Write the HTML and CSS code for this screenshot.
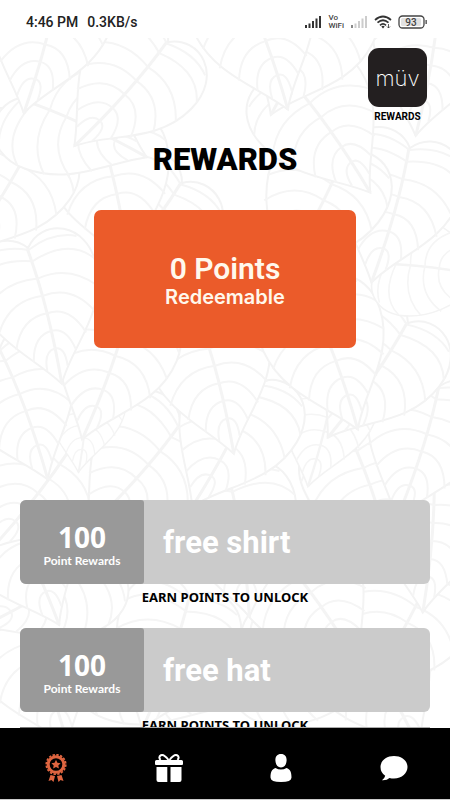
FILE: index.html
```html
<!DOCTYPE html>
<html lang="en">
<head>
<meta charset="utf-8">
<meta name="viewport" content="width=device-width, initial-scale=1">
<title>Rewards</title>
<link rel="stylesheet" href="styles.css">
</head>
<body>
<div class="status">
  <div class="status-left"><span>4:46 PM</span><span>0.3KB/s</span></div>
  <div class="status-right">
    <svg width="18" height="14" viewBox="0 0 18 14" fill="#333"><path d="M1 10h2v3H1zM4.500 8.500h2V13h-2zM8 6h2v7H8zM11.500 3.500h2V13h-2zM15 1h2v12h-2z"/></svg>
    <span class="vowifi"><span>Vo</span><span>WiFi</span></span>
    <svg width="18" height="14" viewBox="0 0 18 14" fill="#ccc"><path fill="#888" d="M1 10h2v3H1z"/><path d="M4.500 8.500h2V13h-2zM8 6h2v7H8zM11.500 3.500h2V13h-2zM15 1h2v12h-2z"/></svg>
    <svg width="18" height="14" viewBox="0 0 18 14" fill="none" stroke="#333" stroke-width="1.700"><path d="M1 5Q9-2 17 5M3.500 7.700Q9 2.800 14.500 7.700M6 10.300Q9 7.500 12 10.300"/><path fill="#333" stroke="none" d="M7.300 11.400Q9 10 10.700 11.400L9 13.500z"/><path stroke-width=".8" d="M14.500 9v4M13 11.500l1.500 1.500 1.500-1.500"/></svg>
    <svg width="30" height="14" viewBox="0 0 30 14"><rect x="1" y="1" width="25" height="12" rx="3.500" fill="#fff" stroke="#444" stroke-width="1.300"/><rect x="3" y="3" width="20" height="8" rx="1.500" fill="#e2e2e2"/><path d="M27.500 5h1.300v4h-1.300z" fill="#444"/><text x="13" y="10.500" text-anchor="middle" class="battery-text">93</text></svg>
  </div>
</div>

<main class="screen">
  <svg class="leaves" viewBox="0 0 450 690" preserveAspectRatio="xMidYMin slice" aria-hidden="true">
    <defs>
      <g id="leaf">
        <path class="leaf-edge" d="M0 0C-20-26-66-12-62 34C-58 82-22 106 0 140C18 106 60 82 62 34C64-12 20-26 0 0Z"/>
        <path class="leaf-rib" d="M-1 0Q6 60 0 140"/>
        <path class="leaf-vein" d="M0 2Q-28-10-50 0M1 14Q-42 0-62 26M2 32Q-36 26-59 54M3 50Q-32 46-50 78M3 68Q-24 66-36 96M3 86Q-16 86-22 112M2 104Q-10 104-11 124M0 2Q28-10 50 0M1 14Q42 0 62 26M2 32Q36 26 59 54M3 50Q34 46 50 78M3 68Q26 66 36 96M3 86Q18 86 22 110M2 104Q12 104 10 124"/>
      </g>
    </defs>
    <use href="#leaf" transform="translate(250 620) rotate(-80)"/>
    <use href="#leaf" transform="translate(100 610) rotate(-65)"/>
    <use href="#leaf" transform="translate(20 575) rotate(-20)"/>
    <use href="#leaf" transform="translate(350 590) rotate(-30)"/>
    <use href="#leaf" transform="translate(430 540) rotate(30)"/>
    <use href="#leaf" transform="translate(280 515) rotate(-35)"/>
    <use href="#leaf" transform="translate(190 560) rotate(20)"/>
    <use href="#leaf" transform="translate(100 520) rotate(60)"/>
    <use href="#leaf" transform="translate(0 460) rotate(-25)"/>
    <use href="#leaf" transform="translate(435 435) rotate(5)"/>
    <use href="#leaf" transform="translate(230 440) rotate(-8)"/>
    <use href="#leaf" transform="translate(352 400) rotate(-18)"/>
    <use href="#leaf" transform="translate(78 400) rotate(38)"/>
    <use href="#leaf" transform="translate(180 388) rotate(42)"/>
    <use href="#leaf" transform="translate(440 348) rotate(18)"/>
    <use href="#leaf" transform="translate(335 340) rotate(14) scale(.8)"/>
    <use href="#leaf" transform="translate(258 345) rotate(28)"/>
    <use href="#leaf" transform="translate(88 344) rotate(6) scale(.65)"/>
    <use href="#leaf" transform="translate(0 310) rotate(-20)"/>
    <use href="#leaf" transform="translate(200 280) rotate(-14)"/>
    <use href="#leaf" transform="translate(408 285) rotate(35)"/>
    <use href="#leaf" transform="translate(310 260) rotate(-20)"/>
    <use href="#leaf" transform="translate(130 270) rotate(20)"/>
    <use href="#leaf" transform="translate(385 225) rotate(-82) scale(.8)"/>
    <use href="#leaf" transform="translate(28 210) rotate(-14)"/>
    <use href="#leaf" transform="translate(410 110) rotate(16)"/>
    <use href="#leaf" transform="translate(182 145) rotate(38)"/>
    <use href="#leaf" transform="translate(345 117) rotate(28)"/>
    <use href="#leaf" transform="translate(100 90) rotate(-12)"/>
    <use href="#leaf" transform="translate(35 100) rotate(32)"/>
    <use href="#leaf" transform="translate(290 40) rotate(-35)"/>
    <use href="#leaf" transform="translate(20 60) rotate(-65)"/>
    <use href="#leaf" transform="translate(168 4) rotate(42)"/>
    <use href="#leaf" transform="translate(440 -40) rotate(10)"/>
    <use href="#leaf" transform="translate(330 -50) rotate(25)"/>
    <use href="#leaf" transform="translate(240 -60) rotate(-20)"/>
    <use href="#leaf" transform="translate(60 -60) rotate(15)"/>
  </svg>

  <header class="brand">
    <div class="brand-tile">müv</div>
    <div class="brand-label">REWARDS</div>
  </header>

  <h1 class="title">REWARDS</h1>

  <section class="points">
    <div class="points-value">0 Points</div>
    <div class="points-label">Redeemable</div>
  </section>

  <ul class="rewards">
    <li class="reward">
      <div class="reward-card">
        <div class="reward-cost"><strong>100</strong><span>Point Rewards</span></div>
        <div class="reward-name">free shirt</div>
      </div>
      <div class="reward-note">EARN POINTS TO UNLOCK</div>
    </li>
    <li class="reward">
      <div class="reward-card">
        <div class="reward-cost"><strong>100</strong><span>Point Rewards</span></div>
        <div class="reward-name">free hat</div>
      </div>
      <div class="reward-note">EARN POINTS TO UNLOCK</div>
    </li>
  </ul>
  <div class="list-edge"></div>
</main>

<nav class="tabs">
  <button class="tab tab-active" type="button" aria-label="Rewards">
    <svg width="28" height="28" viewBox="0 0 28 28"><circle cx="14" cy="10.500" r="7.800" fill="none" stroke="currentColor" stroke-width="3"/><circle cx="14" cy="10.500" r="9.700" fill="none" stroke="currentColor" stroke-width="1.800" stroke-dasharray="2.400 1.410"/><path fill="currentColor" d="M14 5.800l1.400 3 3.200.4-2.300 2.200.6 3.200-2.900-1.600-2.900 1.600.6-3.200-2.300-2.200 3.200-.4zM8.500 21l4.500 1-1.500 6-2-2-3 1zM19.500 21l-4.500 1 1.500 6 2-2 3 1z"/></svg>
  </button>
  <button class="tab" type="button" aria-label="Gifts">
    <svg width="28" height="28" viewBox="0 0 28 28" fill="currentColor"><path d="M1.500 6h25q1.500 0 1.500 1.500V10q0 1-1 1H1q-1 0-1-1V7.500Q0 6 1.500 6zM1.500 13H12.300V28H3.500q-2 0-2-2zM15.500 13h11V26q0 2-2 2h-9z"/><path d="M13.500 6Q9 0 6 1.200Q3 3 5.500 6M14.500 6Q19 0 22 1.200Q25 3 22.500 6" fill="none" stroke="currentColor" stroke-width="2"/></svg>
  </button>
  <button class="tab" type="button" aria-label="Profile">
    <svg width="28" height="28" viewBox="0 0 28 28" fill="currentColor"><path d="M14 0c4 0 5.800 2.800 5.600 6.500C19.400 10.500 17.500 13.500 14 13.500S8.600 10.500 8.400 6.500C8.200 2.800 10 0 14 0zM8.500 14Q11 15.500 14 15.500T19.500 14C23 15 24.500 18 24.500 23.500Q24.500 28 14 28T3.500 23.500C3.500 18 5 15 8.500 14z"/></svg>
  </button>
  <button class="tab" type="button" aria-label="Messages">
    <svg width="28" height="28" viewBox="0 0 28 28" fill="currentColor"><path d="M14 2C22 2 27.500 7 27.500 13S22 24.500 14 24.500q-2.500 0-4.500-.6Q7 26.500 2 26.200q2.800-2 3.200-4.400Q.5 18.500.5 13C.5 7 6 2 14 2z"/></svg>
  </button>
</nav>
</body>
</html>
```
FILE: styles.css
```css
* { box-sizing: border-box; }

body {
  margin: 0;
  height: 100vh;
  display: flex;
  flex-direction: column;
  background: #fff;
  color: #000;
  font-family: Roboto, "Liberation Sans", sans-serif;
}

.status {
  display: flex;
  justify-content: space-between;
  align-items: center;
  height: 38px;
  padding: 6px 22px 0 26px;
  flex: none;
}

.status-left {
  display: flex;
  gap: 9px;
  font-size: 14px;
  font-weight: 500;
  color: #222;
}

.status-right {
  display: flex;
  align-items: center;
  gap: 6px;
}

.vowifi {
  display: flex;
  flex-direction: column;
  font-size: 8px;
  line-height: 8px;
  font-weight: 500;
  color: #444;
}

.battery-text {
  font-size: 10px;
  font-weight: 500;
  fill: #444;
}

.screen {
  position: relative;
  isolation: isolate;
  flex: 1;
  min-height: 0;
  overflow: hidden;
}

.leaves {
  position: absolute;
  z-index: -1;
  inset: 0;
  width: 100%;
  height: 100%;
}

.leaf-edge { fill: #fff; stroke: #f3f3f3; stroke-width: 2; }
.leaf-rib { fill: none; stroke: #f4f4f4; stroke-width: 3; }
.leaf-vein { fill: none; stroke: #f5f5f5; stroke-width: 2; }

.brand {
  width: 59px;
  margin: 10px 23px 0 auto;
  text-align: center;
}

.brand-tile {
  display: flex;
  align-items: center;
  justify-content: center;
  height: 59px;
  border-radius: 11px;
  background: #231f20;
  color: #fff;
  font-family: Inter, sans-serif;
  font-size: 22px;
  font-weight: 200;
}

.brand-label {
  margin-top: 3px;
  font-size: 10px;
  line-height: 14px;
  font-weight: 700;
}

.title {
  margin: 18px 0 0;
  text-align: center;
  font-size: 31px;
  line-height: 36px;
  font-weight: 900;
}

.points {
  width: 58.3%;
  height: 138px;
  margin: 32px auto 0;
  padding-top: 42px;
  border-radius: 7px;
  background: #eb5b2a;
  color: #fff8ed;
  text-align: center;
}

.points-value {
  font-size: 30px;
  line-height: 34px;
  font-weight: 600;
}

.points-label {
  font-family: Inter, sans-serif;
  font-size: 20px;
  line-height: 22px;
  font-weight: 600;
}

.rewards {
  list-style: none;
  margin: 152px 20px 0;
  padding: 0;
}

.reward { height: 128px; }

.reward-card {
  display: flex;
  height: 84px;
  border-radius: 6px;
  background: #cbcbcb;
  color: #fff;
}

.reward-cost {
  display: flex;
  flex-direction: column;
  align-items: center;
  justify-content: center;
  width: 124px;
  padding-top: 6px;
  border-radius: 6px 3px 3px 6px;
  background: #999;
}

.reward-cost strong {
  font-family: "Open Sans", sans-serif;
  font-size: 28px;
  line-height: 32px;
  font-weight: 700;
}

.reward-cost span {
  font-family: Lato, sans-serif;
  font-size: 12px;
  line-height: 16px;
  font-weight: 700;
}

.reward-name {
  align-self: center;
  padding-left: 19px;
  font-size: 31px;
  font-weight: 700;
}

.reward-note {
  margin-top: 4px;
  text-align: center;
  font-family: "Noto Sans", sans-serif;
  font-size: 13px;
  line-height: 18px;
  font-weight: 700;
}

.list-edge {
  position: absolute;
  bottom: 0;
  left: 20px;
  right: 20px;
  height: 1px;
  background: linear-gradient(to right, #777 124px, #aaa 124px);
}

.tabs {
  display: flex;
  flex: none;
  height: 72px;
  background: #000;
  border-bottom: 1px solid #ccc;
}

.tab {
  flex: 1;
  display: flex;
  align-items: center;
  justify-content: center;
  padding: 8px 0 0;
  border: 0;
  background: none;
  color: #fff;
}

.tab-active { color: #df6540; }
```
